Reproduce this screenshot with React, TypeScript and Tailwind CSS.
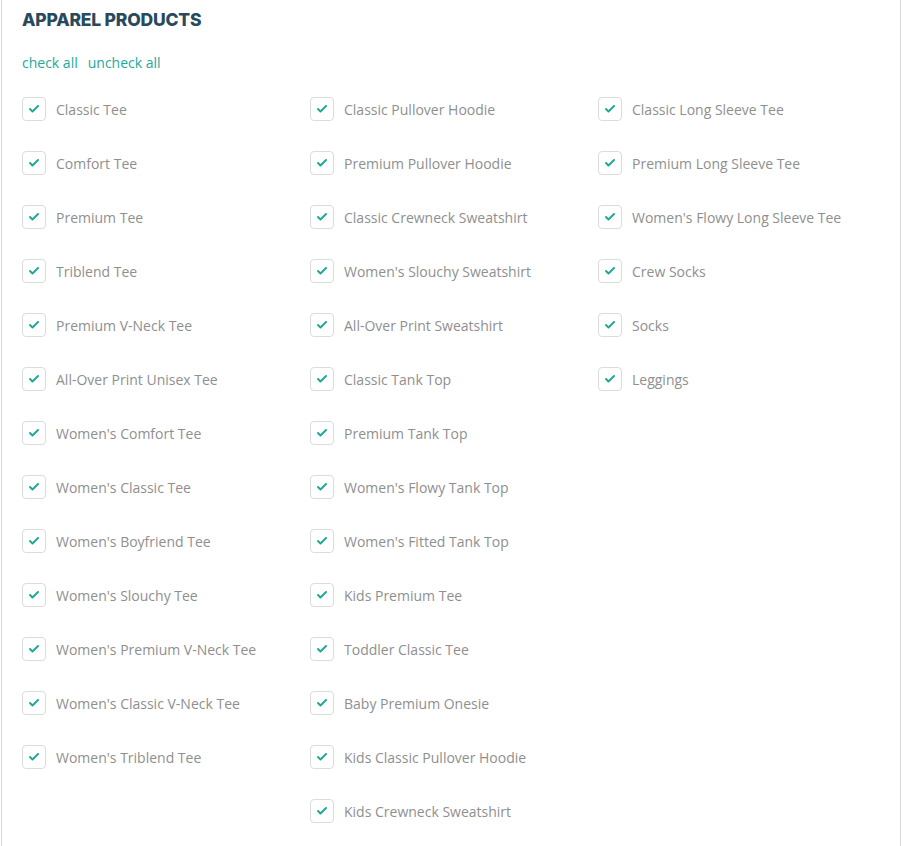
import { Check } from "lucide-react";

const columns: string[][] = [
  [
    "Classic Tee",
    "Comfort Tee",
    "Premium Tee",
    "Triblend Tee",
    "Premium V-Neck Tee",
    "All-Over Print Unisex Tee",
    "Women's Comfort Tee",
    "Women's Classic Tee",
    "Women's Boyfriend Tee",
    "Women's Slouchy Tee",
    "Women's Premium V-Neck Tee",
    "Women's Classic V-Neck Tee",
    "Women's Triblend Tee",
  ],
  [
    "Classic Pullover Hoodie",
    "Premium Pullover Hoodie",
    "Classic Crewneck Sweatshirt",
    "Women's Slouchy Sweatshirt",
    "All-Over Print Sweatshirt",
    "Classic Tank Top",
    "Premium Tank Top",
    "Women's Flowy Tank Top",
    "Women's Fitted Tank Top",
    "Kids Premium Tee",
    "Toddler Classic Tee",
    "Baby Premium Onesie",
    "Kids Classic Pullover Hoodie",
    "Kids Crewneck Sweatshirt",
  ],
  [
    "Classic Long Sleeve Tee",
    "Premium Long Sleeve Tee",
    "Women's Flowy Long Sleeve Tee",
    "Crew Socks",
    "Socks",
    "Leggings",
  ],
];

const Item = ({ label }: { label: string }) => (
  <label className="flex items-center h-[54px] gap-[10px] cursor-pointer">
    <span className="flex items-center justify-center w-6 h-6 rounded-[4px] border border-[#dcdcdc] bg-white">
      <Check size={12} strokeWidth={4} className="text-[#1fa99b]" />
    </span>
    <span className="text-[14px] text-[#8f8f8f]">{label}</span>
  </label>
);

export default function App() {
  return (
    <div className="min-h-screen bg-white" style={{ fontFamily: '"Open Sans", sans-serif' }}>
      <div className="ml-px w-[900px] min-h-[846px] border-x border-[#d9d9d9] bg-white pl-5 pt-[7px]">
        <h2
          className="text-[17.5px] font-extrabold tracking-[-0.2px] text-[#294a5c] leading-[26px]"
          style={{ fontFamily: 'Inter, sans-serif' }}
        >
          APPAREL PRODUCTS
        </h2>
        <div className="mt-[20px] flex gap-[10px] text-[14px] text-[#23a99c] leading-[20px]">
          <a href="#">check all</a>
          <a href="#">uncheck all</a>
        </div>
        <div className="mt-[9px] grid grid-cols-[288px_288px_288px]">
          {columns.map((col, i) => (
            <div key={i} className="flex flex-col">
              {col.map((label) => (
                <Item key={label} label={label} />
              ))}
            </div>
          ))}
        </div>
      </div>
    </div>
  );
}
